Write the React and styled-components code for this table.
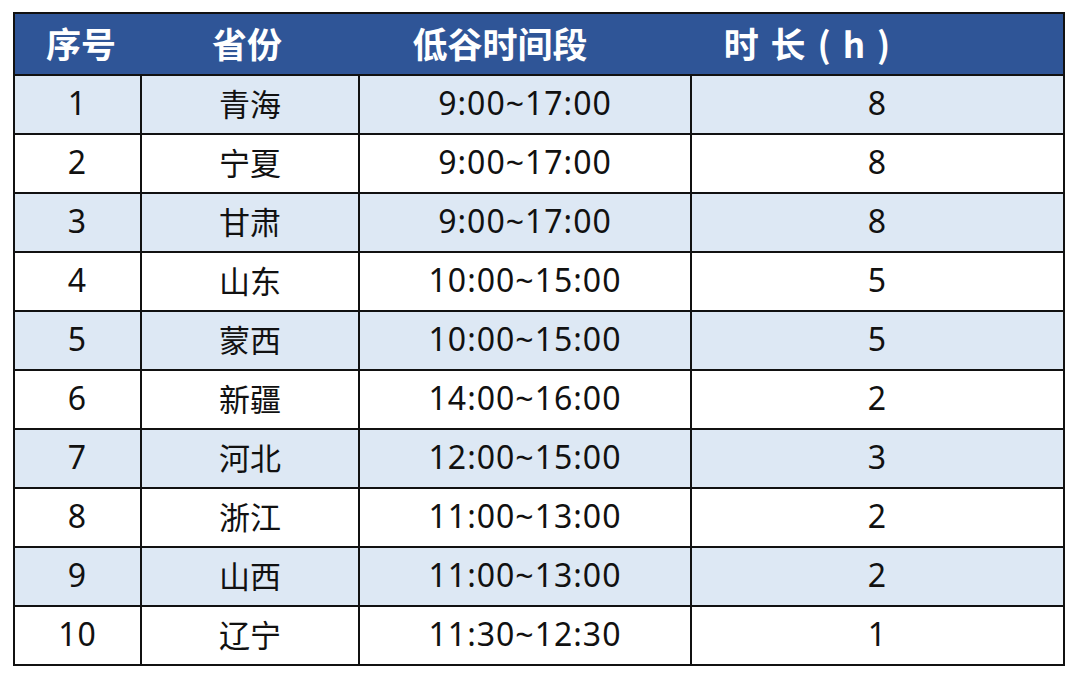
import styled, { createGlobalStyle } from 'styled-components';

const GlobalStyle = createGlobalStyle`
  html, body {
    margin: 0;
    padding: 0;
    background: #ffffff;
  }
  body {
    font-family: "Noto Sans", "Noto Sans CJK SC", sans-serif;
  }
`;

const Page = styled.div`
  width: 1080px;
  height: 683px;
  padding: 12px 0 0 13px;
  box-sizing: border-box;
  background: #ffffff;
`;

const Table = styled.div`
  width: 1052px;
  border: 2px solid #111;
  box-sizing: border-box;
`;

const HeaderRow = styled.div`
  display: grid;
  grid-template-columns: 132px 200px 306px 310px 1fr;
  height: 62px;
  box-sizing: border-box;
  background: #2f5597;
  border-bottom: 2px solid #111;
`;

const HeadCell = styled.div`
  display: flex;
  align-items: center;
  justify-content: center;
  color: #ffffff;
  font-family: "Noto Sans CJK SC", "Noto Sans", sans-serif;
  font-weight: 700;
  font-size: 35px;
  letter-spacing: ${({ $spread }) => ($spread ? '2px' : '0')};
  white-space: pre;
  padding-bottom: 4px;
`;

const Row = styled.div`
  display: grid;
  grid-template-columns: 127px 218px 332px 1fr;
  box-sizing: border-box;
  background: ${({ $shaded }) => ($shaded ? '#dde8f4' : '#ffffff')};
  border-bottom: ${({ $last }) => ($last ? 'none' : '2px solid #111')};
  height: ${({ $last }) => ($last ? '57px' : '59px')};
`;

const Cell = styled.div`
  display: flex;
  align-items: center;
  justify-content: center;
  color: #111;
  padding-bottom: 4px;
  border-right: ${({ $end }) => ($end ? 'none' : '2px solid #111')};
  font-family: ${({ $cjk }) =>
    $cjk ? '"Noto Sans CJK SC", sans-serif' : '"Noto Sans", "Noto Sans CJK SC", sans-serif'};
  font-size: ${({ $cjk }) => ($cjk ? '31px' : '32px')};
  letter-spacing: ${({ $cjk }) => ($cjk ? '0' : '1px')};
`;

const rows = [
  ['1', '青海', '9:00~17:00', '8'],
  ['2', '宁夏', '9:00~17:00', '8'],
  ['3', '甘肃', '9:00~17:00', '8'],
  ['4', '山东', '10:00~15:00', '5'],
  ['5', '蒙西', '10:00~15:00', '5'],
  ['6', '新疆', '14:00~16:00', '2'],
  ['7', '河北', '12:00~15:00', '3'],
  ['8', '浙江', '11:00~13:00', '2'],
  ['9', '山西', '11:00~13:00', '2'],
  ['10', '辽宁', '11:30~12:30', '1'],
];

export default function App() {
  return (
    <>
      <GlobalStyle />
      <Page>
        <Table>
          <HeaderRow>
            <HeadCell>序号</HeadCell>
            <HeadCell>省份</HeadCell>
            <HeadCell>低谷时间段</HeadCell>
            <HeadCell $spread>时 长 ( h )</HeadCell>
            <div />
          </HeaderRow>
          {rows.map((r, i) => (
            <Row key={r[0]} $shaded={i % 2 === 0} $last={i === rows.length - 1}>
              <Cell>{r[0]}</Cell>
              <Cell $cjk>{r[1]}</Cell>
              <Cell>{r[2]}</Cell>
              <Cell $end>{r[3]}</Cell>
            </Row>
          ))}
        </Table>
      </Page>
    </>
  );
}
